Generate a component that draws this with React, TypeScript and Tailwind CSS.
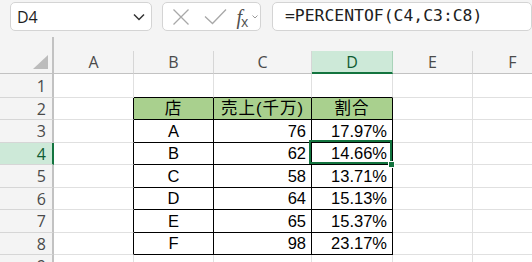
import React from "react";

type Col = { key: string; w: number };

const COLS: Col[] = [
  { key: "A", w: 80 },
  { key: "B", w: 80 },
  { key: "C", w: 98 },
  { key: "D", w: 81 },
  { key: "E", w: 80 },
  { key: "F", w: 80 },
];

// row heights include the 1px bottom gridline
const ROWS = [24, 22, 23, 22, 23, 22, 23, 22, 22];

const DATA: Record<number, [string, string, string]> = {
  2: ["店", "売上(千万)", "割合"],
  3: ["A", "76", "17.97%"],
  4: ["B", "62", "14.66%"],
  5: ["C", "58", "13.71%"],
  6: ["D", "64", "15.13%"],
  7: ["E", "65", "15.37%"],
  8: ["F", "98", "23.17%"],
};

const headerFont = { fontFamily: '"Open Sans", "Noto Sans", sans-serif' };
const cellFont = {
  fontFamily: '"Liberation Sans", "Noto Sans CJK JP", sans-serif',
};

function NameBox() {
  return (
    <div className="w-[155px] h-[29px] bg-white border border-[#d4d4d4] rounded-[5px] flex items-center justify-between pl-[6px] pr-[5px]">
      <span className="text-[16px] text-[#1f1f1f]" style={headerFont}>
        D4
      </span>
      <svg width="14" height="10" viewBox="0 0 14 10">
        <path d="M2 2.5 L7 7.5 L12 2.5" fill="none" stroke="#333" strokeWidth="1.5" />
      </svg>
    </div>
  );
}

function FormulaButtons() {
  return (
    <div className="ml-[10px] w-[107px] h-[29px] bg-white border border-[#d4d4d4] rounded-[5px] flex items-center pl-[9px]">
      <svg width="18" height="18" viewBox="0 0 18 18">
        <path d="M1.5 1.5 L16.5 16.5 M16.5 1.5 L1.5 16.5" stroke="#a8a8a8" strokeWidth="1.3" fill="none" />
      </svg>
      <svg width="24" height="18" viewBox="0 0 24 18" className="ml-[14px]">
        <path d="M1 8.5 L8.5 15.5 L22 1.5" stroke="#a8a8a8" strokeWidth="1.3" fill="none" />
      </svg>
      <span className="ml-[8px] flex items-end leading-none text-[#505050]">
        <span className="italic text-[20px]" style={{ fontFamily: '"Liberation Serif", serif' }}>
          f
        </span>
        <span className="text-[14px] -ml-[1px] translate-y-[2px]" style={headerFont}>
          x
        </span>
      </span>
      <svg width="8" height="6" viewBox="0 0 8 6" className="ml-[3px]">
        <path d="M1.5 1.5 L4 4 L6.5 1.5" stroke="#9a9a9a" strokeWidth="1" fill="none" />
      </svg>
    </div>
  );
}

function FormulaBar() {
  return (
    <div className="ml-[11px] w-[260px] h-[29px] bg-white border border-[#d4d4d4] rounded-[5px] flex items-center pl-[12px] shrink-0">
      <span
        className="text-[16.4px] text-[#202020] whitespace-pre"
        style={{ fontFamily: '"DejaVu Sans Mono", "Liberation Mono", monospace' }}
      >
        =PERCENTOF(C4,C3:C8)
      </span>
    </div>
  );
}

function ColumnHeaders() {
  return (
    <div className="flex h-[37px]">
      {/* select-all corner */}
      <div className="relative w-[54px] h-full shrink-0 border-r-2 border-b border-r-[#c2c2c2] border-b-[#c2c2c2]">
        <svg width="18" height="17" viewBox="0 0 18 17" className="absolute right-[2px] bottom-[2px]">
          <path d="M16 1 L16 15 L1 15 Z" fill="#bcbcbc" />
        </svg>
      </div>
      {COLS.map((c) => {
        const sel = c.key === "D";
        return (
          <div key={c.key} className="flex flex-col shrink-0" style={{ width: c.w }}>
            <div className="h-[14px]" />
            <div
              className={
                sel
                  ? "h-[23px] flex items-center justify-center bg-[#cde9d8] border-b-2 border-b-[#13743f] border-r border-r-[#a9d3b9] text-[#0f5c32] text-[16px]"
                  : "h-[23px] flex items-center justify-center border-r border-r-[#d6d6d6] border-b border-b-[#c2c2c2] text-[#4a4a4a] text-[16px]"
              }
              style={headerFont}
            >
              {c.key}
            </div>
          </div>
        );
      })}
    </div>
  );
}

function cellClass(r: number, ci: number): string {
  const inTable = r >= 2 && r <= 8 && ci >= 1 && ci <= 3;
  const base = "shrink-0 h-full flex items-end pb-[3px] px-[5px] text-[16.5px] leading-none";
  const right =
    inTable || (r >= 2 && r <= 8 && ci === 0) ? "border-r border-r-black" : "border-r border-r-[#e0e0e0]";
  const bottom =
    (r >= 1 && r <= 8 && ci >= 1 && ci <= 3) ? "border-b border-b-black" : "border-b border-b-[#e0e0e0]";
  const bg = r === 2 && inTable ? "bg-[#a9d08e]" : "bg-white";
  let align = "";
  if (ci === 1) align = "justify-center";
  if (ci === 2) align = r === 2 ? "justify-center" : "justify-end";
  if (ci === 3) align = r === 2 ? "justify-center" : "justify-end";
  return [base, right, bottom, bg, align].join(" ");
}

function Row({ r, h }: { r: number; h: number }) {
  const sel = r === 4;
  const data = DATA[r];
  return (
    <div className="flex shrink-0" style={{ height: h }}>
      <div
        className={
          sel
            ? "w-[54px] shrink-0 h-full flex items-center justify-end pr-[6px] bg-[#cde9d8] border-r-2 border-r-[#13743f] border-b border-b-[#d6d6d6] text-[#0f5c32] text-[16px]"
            : "w-[54px] shrink-0 h-full flex items-center justify-end pr-[6px] border-r-2 border-r-[#c2c2c2] border-b border-b-[#d6d6d6] text-[#4a4a4a] text-[16px]"
        }
        style={headerFont}
      >
        {r}
      </div>
      {COLS.map((c, ci) => (
        <div key={c.key} className={cellClass(r, ci)} style={{ width: c.w, ...cellFont }}>
          {data && ci >= 1 && ci <= 3 ? (
            <span className={r === 2 ? "tracking-[1px] text-black" : "text-black"}>{data[ci - 1]}</span>
          ) : null}
        </div>
      ))}
    </div>
  );
}

export default function App() {
  return (
    <div className="relative w-[532px] h-[262px] overflow-hidden bg-[#f4f4f4] select-none">
      {/* ribbon: name box, formula buttons, formula bar */}
      <div className="flex items-start h-[37px] pt-[2px] pl-[10px]">
        <NameBox />
        <FormulaButtons />
        <FormulaBar />
      </div>

      <ColumnHeaders />

      <div className="flex flex-col">
        {ROWS.map((h, i) => (
          <Row key={i} r={i + 1} h={h} />
        ))}
      </div>

      {/* active cell outline with fill handle */}
      <div className="absolute left-[309px] top-[140px] w-[83px] h-[24px] border-2 border-[#13743f] pointer-events-none" />
      <div className="absolute left-[388px] top-[161px] w-[7px] h-[7px] bg-[#13743f] border border-white pointer-events-none" />
    </div>
  );
}
